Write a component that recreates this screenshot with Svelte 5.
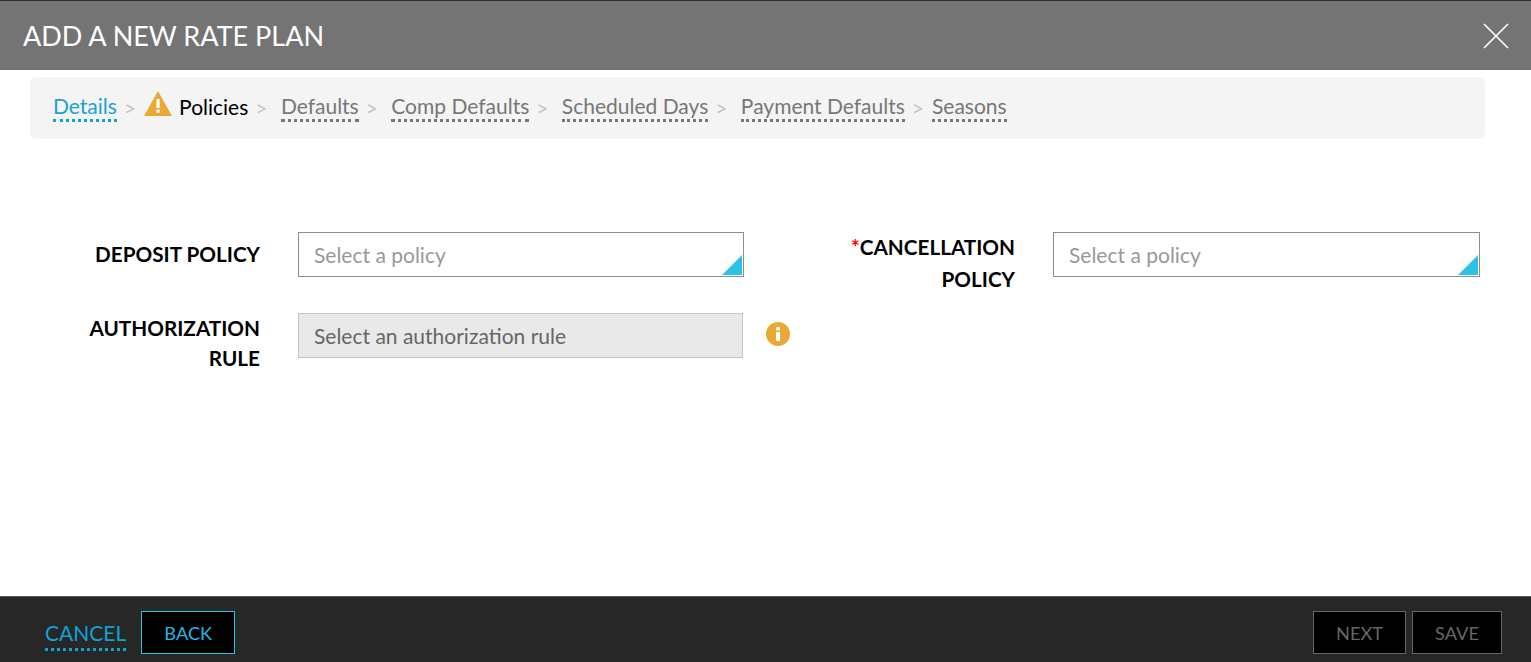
<script>
  const steps = [
    { label: "Details", state: "done" },
    { label: "Policies", state: "current" },
    { label: "Defaults" },
    { label: "Comp Defaults" },
    { label: "Scheduled Days" },
    { label: "Payment Defaults" },
    { label: "Seasons" }
  ];
</script>

<div class="modal">
  <header class="modal__head">
    <h1 class="modal__title">ADD A NEW RATE PLAN</h1>
    <button class="modal__close" aria-label="Close">
      <svg width="26" height="26" viewBox="0 0 26 26">
        <path d="M1 1 L25 25 M25 1 L1 25" stroke="#fff" stroke-width="1.6" fill="none" />
      </svg>
    </button>
  </header>

  <nav class="steps">
    {#each steps as step, i}
      {#if i > 0}
        <span class="steps__sep" class:steps__sep--tight={i === steps.length - 1}>&gt;</span>
      {/if}
      {#if step.state === "current"}
        <svg class="steps__warn" width="28" height="25" viewBox="0 0 28 25">
          <path d="M14 0 L28 25 L0 25 Z" fill="#e9a935" />
          <rect x="12.4" y="8" width="3.2" height="9" fill="#fff" />
          <rect x="12.4" y="18.6" width="3.2" height="3.2" fill="#fff" />
        </svg>
        <span class="steps__current">{step.label}</span>
      {:else}
        <a href="#top" class="steps__link" class:steps__link--done={step.state === "done"}>{step.label}</a>
      {/if}
    {/each}
  </nav>

  <main class="form">
    <div class="form__label">DEPOSIT POLICY</div>
    <div class="select">
      <span class="select__text">Select a policy</span>
      <span class="select__corner"></span>
    </div>
    <div class="form__label form__label--tall"><span class="req">*</span>CANCELLATION POLICY</div>
    <div class="select">
      <span class="select__text">Select a policy</span>
      <span class="select__corner"></span>
    </div>

    <div class="form__label form__label--auth">AUTHORIZATION RULE</div>
    <div class="select select--disabled">
      <span class="select__text">Select an authorization rule</span>
    </div>
    <svg class="info" width="24" height="24" viewBox="0 0 24 24">
      <circle cx="12" cy="12" r="12" fill="#e9a935" />
      <rect x="10" y="5" width="4" height="3.6" rx="1" fill="#fff" />
      <rect x="10" y="10" width="4" height="9" fill="#fff" />
    </svg>
  </main>

  <footer class="bar">
    <a href="#top" class="bar__cancel">CANCEL</a>
    <button class="btn btn--active btn--back">BACK</button>
    <div class="bar__right">
      <button class="btn btn--next">NEXT</button>
      <button class="btn btn--save">SAVE</button>
    </div>
  </footer>
</div>

<style>
  :global(body) {
    margin: 0;
    background: #fff;
    overflow: hidden;
  }
  .modal {
    height: 662px;
    display: flex;
    flex-direction: column;
    font-family: Lato, "Open Sans", sans-serif;
    color: #000;
  }
  .modal__head {
    height: 69px;
    flex: none;
    display: flex;
    align-items: center;
    justify-content: space-between;
    padding: 0 22px 0 23px;
    background: #747474;
    border-top: 1px solid #2b2b2b;
  }
  .modal__title {
    margin: 0;
    font-size: 27px;
    font-weight: 400;
    color: #fff;
  }
  .modal__close {
    width: 26px;
    height: 26px;
    padding: 0;
    border: 0;
    background: none;
    display: flex;
  }
  .steps {
    flex: none;
    height: 62px;
    margin: 7px 46px 0 30px;
    padding: 0 23px 1px;
    box-sizing: border-box;
    display: flex;
    align-items: center;
    background: #f4f4f4;
    border-radius: 6px;
    font-size: 21px;
  }
  .steps__sep {
    margin: 0 13.4px 0 7px;
    color: #c4c4c4;
  }
  .steps__sep--tight {
    margin-right: 8px;
  }
  .steps__warn {
    margin: -9px 7px 0 -5.4px;
  }
  .steps__current {
    color: #000;
    margin-top: -3px;
  }
  .steps__link {
    color: #777;
    text-decoration: none;
    border-bottom: 3px dotted #777;
    line-height: 26px;
  }
  .steps__link--done {
    color: #18a3cf;
    border-bottom-color: #0ca5d2;
  }
  .form {
    flex: 1;
    display: grid;
    grid-template-columns: 230px 446px 233px 427px;
    column-gap: 38px;
    grid-template-rows: 45px 45px;
    row-gap: 36px;
    padding: 93px 0 0 30px;
    box-sizing: border-box;
    align-content: start;
  }
  .form__label {
    text-align: right;
    font-size: 20.7px;
    font-weight: 700;
    line-height: 32px;
    padding-top: 6px;
  }
  .form__label--tall {
    padding: 0 0 0 40px;
    margin-top: -1px;
  }
  .form__label--auth {
    padding: 0 0 0 40px;
    line-height: 30px;
  }
  .req {
    color: #f00;
  }
  .select {
    position: relative;
    box-sizing: border-box;
    height: 45px;
    border: 1px solid #8d8d8d;
    background: #fff;
    display: flex;
    align-items: center;
    padding-left: 15px;
    font-size: 21px;
    color: #999;
  }
  .select--disabled {
    border-color: #c4c4c4;
    background: #e9e9e9;
    color: #666;
    width: 445px;
  }
  .select__corner {
    position: absolute;
    right: 1px;
    bottom: 1px;
    width: 20px;
    height: 20px;
    background: #29c3e6;
    clip-path: polygon(100% 0, 100% 100%, 0 100%);
  }
  .info {
    grid-column: 3;
    margin-top: 9px;
    margin-left: -16px;
  }
  .bar {
    flex: none;
    height: 66px;
    box-sizing: border-box;
    display: flex;
    align-items: center;
    padding: 6px 29px 0 45px;
    background: #272727;
    border-top: 1px solid #555;
  }
  .bar__cancel {
    color: #0ca5d2;
    font-size: 21px;
    text-decoration: none;
    border-bottom: 3px dotted #0ca5d2;
    line-height: 31px;
    margin: 2px 15px 0 0;
  }
  .bar__right {
    margin-left: auto;
    display: flex;
    gap: 6px;
  }
  .btn {
    height: 43px;
    box-sizing: border-box;
    background: #000;
    border: 1px solid #666;
    color: #666;
    font-family: inherit;
    font-size: 18.2px;
    padding: 0;
  }
  .btn--active {
    border-color: #29c3e6;
    color: #29b5e0;
  }
  .btn--back {
    width: 94px;
  }
  .btn--next {
    width: 93px;
  }
  .btn--save {
    width: 90px;
  }
</style>
